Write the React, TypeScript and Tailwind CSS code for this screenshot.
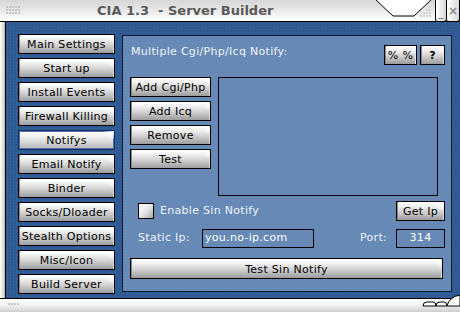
import React from "react";

const BTN =
  "relative flex items-center justify-center border border-black text-[11px] leading-none tracking-[0.3px] text-black bg-[linear-gradient(180deg,#ffffff_0%,#f6f6f6_18%,#d2d2d2_55%,#9c9c9c_100%)] shadow-[inset_1px_0_0_#8a8a8a,inset_-1px_0_0_#e0e0e0]";
const BTN_SEL =
  "relative flex items-center justify-center border border-[#16305a] text-[11px] leading-none tracking-[0.3px] text-black bg-[linear-gradient(180deg,#ffffff_0%,#f4f4f4_25%,#dadada_60%,#b4b4b4_100%)] shadow-[inset_0_0_0_1px_#4a72ad]";

function Btn({
  children,
  className = "",
  selected = false,
}: {
  children: React.ReactNode;
  className?: string;
  selected?: boolean;
}) {
  return (
    <div className={`${selected ? BTN_SEL : BTN} ${className}`}>
      <span className="relative z-10 mt-[1px] whitespace-pre">{children}</span>
      <span className="absolute right-0 top-0 h-[8px] w-[10px] bg-[linear-gradient(225deg,#ffffff_0%,rgba(255,255,255,0)_70%)]" />
    </div>
  );
}

const side = [
  "Main Settings",
  "Start up",
  "Install Events",
  "Firewall Killing",
  "Notifys",
  "Email Notify",
  "Binder",
  "Socks/Dloader",
  "Stealth Options",
  "Misc/Icon",
  "Build Server",
];

function Dots({ cols, rows }: { cols: number; rows: number }) {
  const items = [];
  for (let r = 0; r < rows; r++)
    for (let c = 0; c < cols; c++)
      items.push(<rect key={`${r}-${c}`} x={c * 3} y={r * 3} width={2} height={2} fill="#c4c4c4" />);
  return (
    <svg width={cols * 3} height={rows * 3}>
      {items}
    </svg>
  );
}

export default function App() {
  return (
    <div className="relative flex h-[312px] w-[460px] flex-col overflow-hidden bg-white font-['DejaVu_Sans',Verdana,sans-serif]">
      {/* Title bar */}
      <div className="relative flex h-[22px] shrink-0 items-center border-b border-black bg-[linear-gradient(180deg,#d6d6d6_0%,#e4e4e4_40%,#f8f8f8_80%,#ffffff_100%)] pl-[97px]">
        <div className="absolute left-[6px] top-[6px]">
          <Dots cols={5} rows={3} />
        </div>
        <span className="whitespace-pre text-[13px] font-bold leading-none text-[#595959]">
          CIA 1.3  - Server Builder
        </span>
        <svg className="absolute right-0 top-0" width="84" height="22" viewBox="376 0 84 22">
          <polygon points="376,0 393,16 414,16 431,0" fill="#ffffff" />
          <polyline points="376,0 393,16 414,16 431,0" fill="none" stroke="#000" strokeWidth="1" />
          <g fill="#d0d0d0">
            <rect x="429" y="6" width="2" height="2" />
            <rect x="426" y="9" width="2" height="2" />
            <rect x="429" y="9" width="2" height="2" />
            <rect x="423" y="12" width="2" height="2" />
            <rect x="426" y="12" width="2" height="2" />
            <rect x="429" y="12" width="2" height="2" />
            <rect x="420" y="15" width="2" height="2" />
            <rect x="423" y="15" width="2" height="2" />
            <rect x="426" y="15" width="2" height="2" />
            <rect x="429" y="15" width="2" height="2" />
          </g>
        </svg>
        <div className="absolute right-0 top-0 flex h-[22px]">
          <div className="flex h-[22px] w-[12px] items-center justify-center rounded-b-[3px] border border-t-0 border-black bg-[linear-gradient(90deg,#ffffff,#d8d8d8)] text-[11px] font-bold leading-none text-[#8a8a8a]">
            <span className="mt-[4px]">_</span>
          </div>
          <div className="flex h-[22px] w-[13px] items-center justify-center rounded-b-[3px] border border-l-0 border-t-0 border-black bg-[linear-gradient(90deg,#ffffff,#d8d8d8)] text-[12px] font-bold leading-none text-[#8a8a8a]">
            ×
          </div>
        </div>
      </div>

      {/* Middle */}
      <div className="flex h-[276px] shrink-0">
        <div className="w-[6px] shrink-0 border-r border-black bg-[linear-gradient(90deg,#ffffff,#e8e8e8_50%,#b8b8b8)]" />
        <div className="flex flex-1 gap-[7px] bg-[#2f5a91] bg-[radial-gradient(#3c69a3_1px,transparent_1px)] bg-[size:3px_3px] pl-[12px] pt-[12px]">
          {/* Sidebar */}
          <div className="flex w-[97px] shrink-0 flex-col gap-[4px]">
            {side.map((s) => (
              <Btn key={s} className="h-[20px]" selected={s === "Notifys"}>
                {s}
              </Btn>
            ))}
          </div>

          {/* Panel */}
          <div className="mt-[1px] flex h-[257px] w-[330px] shrink-0 flex-col border border-[#0d1b30] bg-[#6689b5] pl-[7px] pr-[6px] pt-[9px] text-[11px] tracking-[0.3px] text-[#eef3fa]">
            <div className="flex items-start">
              <span className="ml-[1px] leading-[14px]">Multiple Cgi/Php/Icq Notify:</span>
              <div className="ml-auto flex gap-[3px]">
                <Btn className="h-[20px] w-[33px]">% %</Btn>
                <Btn className="h-[20px] w-[25px] font-bold">?</Btn>
              </div>
            </div>

            <div className="mt-[12px] flex gap-[7px]">
              <div className="flex w-[81px] flex-col gap-[4px]">
                <Btn className="h-[20px]">Add Cgi/Php</Btn>
                <Btn className="h-[20px]">Add Icq</Btn>
                <Btn className="h-[20px]">Remove</Btn>
                <Btn className="h-[20px]">Test</Btn>
              </div>
              <div className="h-[119px] w-[220px] border border-black" />
            </div>

            <div className="mt-[5px] flex h-[20px] items-center">
              <div className="ml-[8px] h-[16px] w-[16px] border border-black bg-[linear-gradient(135deg,#ffffff_0%,#e6e6e6_50%,#a8a8a8_100%)]" />
              <span className="ml-[6px]">Enable Sin Notify</span>
              <Btn className="ml-auto h-[20px] w-[49px]">Get Ip</Btn>
            </div>

            <div className="mt-[8px] flex h-[19px] items-center">
              <span className="ml-[8px] w-[64px]">Static Ip:</span>
              <div className="flex h-[19px] w-[112px] items-center border border-black pl-[2px] text-white">
                you.no-ip.com
              </div>
              <span className="ml-[46px] w-[36px]">Port:</span>
              <div className="flex h-[19px] w-[49px] items-center justify-center border border-black text-white">
                314
              </div>
            </div>

            <Btn className="mt-[10px] h-[21px] w-[313px]">Test Sin Notify</Btn>
          </div>
        </div>
      </div>

      {/* Bottom bar */}
      <div className="relative h-[14px] shrink-0 border-t border-black bg-[linear-gradient(180deg,#ffffff_0%,#f0f0f0_50%,#cfcfcf_100%)]">
        <div className="absolute left-[8px] top-[4px]">
          <Dots cols={4} rows={1} />
        </div>
        <svg className="absolute right-0 top-[-8px]" width="40" height="22" viewBox="420 290 40 22">
          <path d="M423,305 Q423,301 427,301 L433,301 Q436,301 436,305 Z" fill="#fff" stroke="#000" />
          <path d="M436,305 Q436,301 440,301 L444,301 Q447,301 447,305 Z" fill="#fff" stroke="#000" />
          <path d="M447,305 Q449,296 460,294 L460,305 Z" fill="#fff" stroke="#000" />
        </svg>
      </div>
    </div>
  );
}
